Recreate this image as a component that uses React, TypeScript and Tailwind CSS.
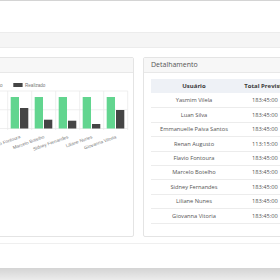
import React from "react";

const users = [
  { name: "Yasmim Vilela", prev: "183:45:00" },
  { name: "Luan Silva", prev: "183:45:00" },
  { name: "Emmanuelle Paiva Santos", prev: "183:45:00" },
  { name: "Renan Augusto", prev: "113:15:00" },
  { name: "Flavio Fontoura", prev: "183:45:00" },
  { name: "Marcelo Botelho", prev: "183:45:00" },
  { name: "Sidney Fernandes", prev: "183:45:00" },
  { name: "Liliane Nunes", prev: "183:45:00" },
  { name: "Giovanna Vitoria", prev: "183:45:00" },
];

// bar tops (page y) per group
const darkTops = [112, 118, 110, 129.5, 109, 120.7, 121.7, 125, 111];
const greenTops = [98, 98, 98, 110, 98, 98, 98, 98, 98];

function Chart() {
  const base = 129.5;
  const firstLeft = 7.7 - 24 * 4;
  return (
    <svg width={272} height={162} viewBox="-139 74 272 162" className="block">
      {/* legend */}
      <rect x={-25} y={84} width={9.3} height={4} fill="#62d58f" />
      <text x={-14} y={88} fontSize={4.6} fill="#777" fontFamily="'Liberation Sans', Arial, sans-serif">Previsto</text>
      <rect x={13.3} y={84} width={9.3} height={4} fill="#454545" />
      <text x={25} y={88} fontSize={4.6} fill="#777" fontFamily="'Liberation Sans', Arial, sans-serif">Realizado</text>
      {/* horizontal grid */}
      {[92, 110.75, 129.5].map((y) => (
        <line key={y} x1={firstLeft} x2={127.7} y1={y} y2={y} stroke="#e8e8e8" strokeWidth={0.7} />
      ))}
      {users.map((u, i) => {
        const bl = firstLeft + 24 * i;
        const cx = bl + 12;
        return (
          <g key={u.name}>
            <line x1={bl + 24} x2={bl + 24} y1={92} y2={131} stroke="#e8e8e8" strokeWidth={0.7} />
            <rect x={bl + 3} y={greenTops[i]} width={8.3} height={base - greenTops[i]} fill="#62d58f" />
            {base - darkTops[i] > 0 && (
              <rect x={bl + 12.3} y={darkTops[i]} width={8.3} height={base - darkTops[i]} fill="#454545" />
            )}
            <text
              x={cx + 1}
              y={139}
              fontSize={4.6}
              fill="#777"
              textAnchor="end"
              fontFamily="'Liberation Sans', Arial, sans-serif"
              transform={`rotate(-20 ${cx + 1} 139)`}
            >
              {u.name}
            </text>
          </g>
        );
      })}
      <line x1={firstLeft} x2={firstLeft} y1={92} y2={131} stroke="#e8e8e8" strokeWidth={0.7} />
    </svg>
  );
}

export default function App() {
  return (
    <div className="w-[280px] h-[280px] overflow-hidden bg-white font-['Open_Sans',sans-serif]">
      <div className="h-px bg-[#d4d4d4]" />
      <div className="h-[31px]" />
      <div className="h-[16px] bg-[#f5f5f5] border-t border-b border-[#ececec]" />
      <div className="pt-[9px] pb-[6px] border-b border-[#efefef]">
        <div className="flex gap-[9px] ml-[-140px]">
          <div className="w-[274px] h-[180px] shrink-0 bg-white border border-[#e4e4e4] rounded-[2px] overflow-hidden">
            <div className="h-[15px] bg-[#f7f7f7] border-b border-[#e8e8e8]" />
            <Chart />
          </div>
          <div className="w-[274px] h-[180px] shrink-0 bg-white border border-[#e4e4e4] rounded-[2px] overflow-hidden">
            <div className="h-[15px] bg-[#f7f7f7] border-b border-[#e8e8e8] px-[7px] flex items-center text-[7px] text-[#555]">
              Detalhamento
            </div>
            <div className="pt-[6px] pl-[7px]">
              <div className="grid grid-cols-[86px_56px_60px_60px] bg-[#eef1f6] h-[14px] items-center text-[6px] font-bold text-[#3a3a3a] text-center">
                <div>Usuário</div>
                <div className="whitespace-nowrap">Total Previsto</div>
                <div className="whitespace-nowrap">Total Realizado</div>
                <div />
              </div>
              {users.map((u, i) => (
                <div
                  key={u.name}
                  className={`grid grid-cols-[86px_56px_60px_60px] h-[14.4px] items-center text-[5.7px] text-[#555] text-center ${i > 0 ? "border-t border-[#ececec]" : ""}`}
                >
                  <div className="whitespace-nowrap">{u.name}</div>
                  <div>{u.prev}</div>
                  <div />
                  <div />
                </div>
              ))}
              <div className="border-t border-[#ececec]" />
            </div>
          </div>
        </div>
      </div>
      <div className="h-[24px]" />
      <div className="h-[12px] bg-linear-to-b from-[#d4d4d4] to-[#ececec]" />
    </div>
  );
}
